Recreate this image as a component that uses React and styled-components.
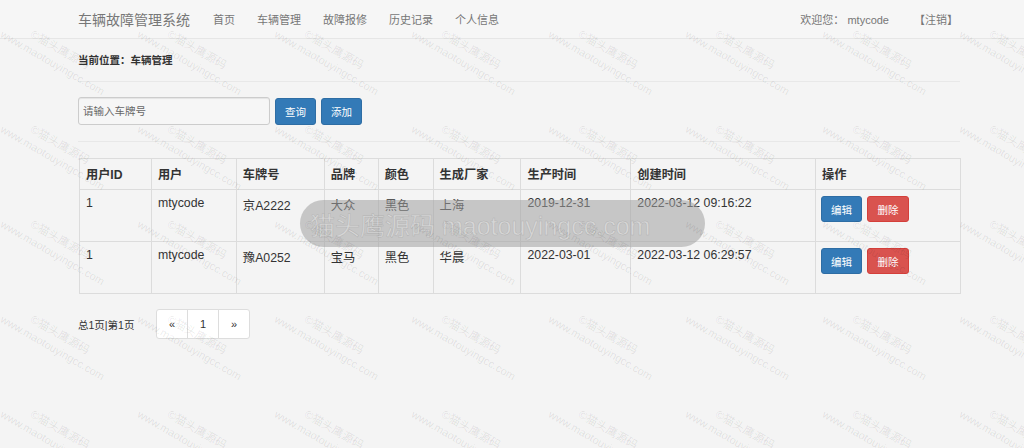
import React from 'react';
import styled, { createGlobalStyle } from 'styled-components';

const GlobalStyle = createGlobalStyle`
  html, body {
    margin: 0;
    padding: 0;
    background: #f4f4f4;
    font-family: "Liberation Sans", Arial, "Noto Sans CJK SC", sans-serif;
    color: #333;
  }
`;

const Page = styled.div`
  position: relative;
  width: 1024px;
  height: 448px;
  overflow: hidden;
  background: #f4f4f4;
`;

// top navbar
const Navbar = styled.nav`
  height: 38px;
  border-bottom: 1px solid #e6e6e6;
  background: #f6f6f6;
  display: flex;
  align-items: center;
  padding: 0 66px 0 78px;
`;

const Brand = styled.div`
  font-size: 14px;
  color: #777;
  margin-right: 23px;
`;

const NavLink = styled.a`
  font-size: 11px;
  color: #777;
  margin-right: 22px;
  text-decoration: none;
`;

const NavRight = styled.div`
  margin-left: auto;
  display: flex;
  align-items: center;
  font-size: 11px;
  color: #777;
  gap: 25px;
`;

const Container = styled.div`
  padding: 0 64px 0 78px;
`;

const Breadcrumb = styled.div`
  font-size: 10.5px;
  font-weight: bold;
  color: #333;
  padding: 13px 0 14px;
  border-bottom: 1px solid #e8e8e8;
`;

const Toolbar = styled.div`
  display: flex;
  align-items: center;
  padding: 15px 0 16px;
  border-bottom: 1px solid #e8e8e8;
`;

const SearchInput = styled.input`
  box-sizing: border-box;
  width: 192px;
  height: 28px;
  border: 1px solid #ccc;
  border-radius: 3px;
  background: #f6f6f6;
  padding: 0 4px;
  font-size: 10.5px;
  font-family: inherit;
  color: #555;
  margin-right: 5px;
  box-shadow: inset 0 1px 1px rgba(0, 0, 0, 0.075);
  &::placeholder {
    color: #666;
  }
`;

const Btn = styled.button`
  box-sizing: border-box;
  height: ${(p) => p.h || 27}px;
  width: ${(p) => p.w || 41}px;
  margin-right: 5px;
  border-radius: 3px;
  font-size: 10.5px;
  font-family: inherit;
  color: #fff;
  padding: 0;
  background: ${(p) => (p.danger ? '#d9534f' : '#337ab7')};
  border: 1px solid ${(p) => (p.danger ? '#d43f3a' : '#2e6da4')};
`;

const Table = styled.table`
  margin-top: 16px;
  width: 882px;
  margin-left: 1px;
  border-collapse: collapse;
  font-size: 12.3px;
  color: #333;
`;

const Th = styled.th`
  text-align: left;
  font-weight: bold;
  border: 1px solid #dcdcdc;
  height: 31px;
  padding: 0 6px;
  box-sizing: border-box;
  width: ${(p) => p.w}px;
  font-size: 12.2px;
`;

const Td = styled.td`
  border: 1px solid #dcdcdc;
  vertical-align: top;
  padding: 6px 6px 0;
  height: 52px;
  box-sizing: border-box;
`;

const ActionCell = styled(Td)`
  padding: 6px 5px 0;
`;

const Actions = styled.div`
  display: flex;
`;

const Footer = styled.div`
  display: flex;
  align-items: center;
  margin-top: 15px;
`;

const PageInfo = styled.span`
  font-size: 10.5px;
  color: #333;
  width: 78px;
`;

const Pager = styled.ul`
  display: flex;
  margin: 0;
  padding: 0;
  list-style: none;
`;

const PagerItem = styled.li`
  box-sizing: border-box;
  width: 32px;
  height: 30px;
  display: flex;
  align-items: center;
  justify-content: center;
  background: #fff;
  border: 1px solid #ddd;
  margin-left: -1px;
  font-size: 11px;
  color: #333;
  &:first-child {
    border-radius: 3px 0 0 3px;
    margin-left: 0;
  }
  &:last-child {
    border-radius: 0 3px 3px 0;
  }
`;

// grey watermark pill on top of the table
const Pill = styled.div`
  position: absolute;
  left: 300px;
  top: 200px;
  width: 405px;
  height: 47px;
  border-radius: 24px;
  background: rgba(160, 160, 160, 0.55);
  display: flex;
  align-items: center;
  padding-left: 10px;
  box-sizing: border-box;
  font-size: 25px;
  color: rgba(235, 235, 235, 0.45);
  -webkit-text-stroke: 0.5px rgba(150, 150, 150, 0.5);
  pointer-events: none;
  white-space: nowrap;
  overflow: hidden;
  font-family: "Liberation Sans", "Noto Sans CJK SC", sans-serif;
`;

// faint diagonal watermark tiles over the whole page
const Marks = styled.div`
  position: absolute;
  left: -132px;
  top: -90px;
  pointer-events: none;
  display: grid;
  grid-template-columns: repeat(9, 137px);
  grid-auto-rows: 95px;
`;

const Mark = styled.div`
  transform: rotate(30deg);
  transform-origin: 0 22px;
  color: rgba(0, 0, 0, 0.09);
  white-space: nowrap;
  line-height: 15px;
  padding-top: 7px;
`;

const MarkLine = styled.div`
  font-size: ${(p) => (p.cn ? 11.5 : 11)}px;
  margin-left: ${(p) => (p.cn ? 26 : 0)}px;
`;

const rows = [
  { id: 1, user: 'mtycode', plate: '京A2222', brand: '大众', color: '黑色', maker: '上海', made: '2019-12-31', created: '2022-03-12 09:16:22' },
  { id: 1, user: 'mtycode', plate: '豫A0252', brand: '宝马', color: '黑色', maker: '华晨', made: '2022-03-01', created: '2022-03-12 06:29:57' },
];

const cols = [
  ['用户ID', 72], ['用户', 85], ['车牌号', 88], ['品牌', 54], ['颜色', 55],
  ['生成厂家', 88], ['生产时间', 110], ['创建时间', 185], ['操作', 145],
];

export default function App() {
  return (
    <Page>
      <GlobalStyle />
      <Navbar>
        <Brand>车辆故障管理系统</Brand>
        <NavLink>首页</NavLink>
        <NavLink>车辆管理</NavLink>
        <NavLink>故障报修</NavLink>
        <NavLink>历史记录</NavLink>
        <NavLink>个人信息</NavLink>
        <NavRight>
          <span>欢迎您： mtycode</span>
          <span>【注销】</span>
        </NavRight>
      </Navbar>
      <Container>
        <Breadcrumb>当前位置：车辆管理</Breadcrumb>
        <Toolbar>
          <SearchInput placeholder="请输入车牌号" />
          <Btn>查询</Btn>
          <Btn>添加</Btn>
        </Toolbar>
        <Table>
          <thead>
            <tr>
              {cols.map(([t, w]) => (
                <Th key={t} w={w}>{t}</Th>
              ))}
            </tr>
          </thead>
          <tbody>
            {rows.map((r) => (
              <tr key={r.plate}>
                <Td>{r.id}</Td>
                <Td>{r.user}</Td>
                <Td>{r.plate}</Td>
                <Td>{r.brand}</Td>
                <Td>{r.color}</Td>
                <Td>{r.maker}</Td>
                <Td>{r.made}</Td>
                <Td>{r.created}</Td>
                <ActionCell>
                  <Actions>
                    <Btn h={26} w={41}>编辑</Btn>
                    <Btn h={26} w={42} danger>删除</Btn>
                  </Actions>
                </ActionCell>
              </tr>
            ))}
          </tbody>
        </Table>
        <Footer>
          <PageInfo>总1页|第1页</PageInfo>
          <Pager>
            <PagerItem>«</PagerItem>
            <PagerItem>1</PagerItem>
            <PagerItem>»</PagerItem>
          </Pager>
        </Footer>
      </Container>
      <Pill>猫头鹰源码 maotouyingcc.com</Pill>
      <Marks>
        {Array.from({ length: 54 }).map((_, i) => (
          <Mark key={i}>
            <MarkLine cn>©猫头鹰源码</MarkLine>
            <MarkLine>www.maotouyingcc.com</MarkLine>
          </Mark>
        ))}
      </Marks>
    </Page>
  );
}
